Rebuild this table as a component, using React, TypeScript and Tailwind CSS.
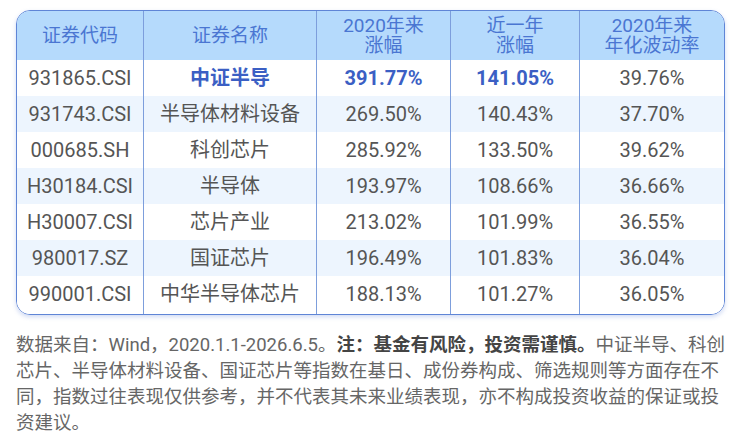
import React from "react";

const rows = [
  ["931865.CSI", "中证半导", "391.77%", "141.05%", "39.76%"],
  ["931743.CSI", "半导体材料设备", "269.50%", "140.43%", "37.70%"],
  ["000685.SH", "科创芯片", "285.92%", "133.50%", "39.62%"],
  ["H30184.CSI", "半导体", "193.97%", "108.66%", "36.66%"],
  ["H30007.CSI", "芯片产业", "213.02%", "101.99%", "36.55%"],
  ["980017.SZ", "国证芯片", "196.49%", "101.83%", "36.04%"],
  ["990001.CSI", "中华半导体芯片", "188.13%", "101.27%", "36.05%"],
];

const font = { fontFamily: 'Roboto, "Noto Sans CJK SC", sans-serif' };

export default function App() {
  return (
    <div className="w-[734px] h-[432px] bg-white overflow-hidden pt-[10px] px-[9px]" style={font}>
      <div className="ml-[7px] w-[709px] rounded-[14px] border-[1.5px] border-[#5f85d6] overflow-hidden shadow-[0_2px_4px_rgba(70,110,210,0.25)]">
        <div className="grid grid-cols-[126px_173px_134px_129px_1fr] h-[49px] bg-[#b5dafc] text-[#4a76d2] text-[19px] leading-[20px]">
          <div className="flex items-center justify-center">证券代码</div>
          <div className="flex items-center justify-center border-l border-[#7d9edc]">证券名称</div>
          <div className="flex flex-col items-center justify-center text-center border-l border-[#7d9edc]"><span>2020年来</span><span>涨幅</span></div>
          <div className="flex flex-col items-center justify-center text-center border-l border-[#7d9edc]"><span>近一年</span><span>涨幅</span></div>
          <div className="flex flex-col items-center justify-center text-center border-l border-[#7d9edc]"><span>2020年来</span><span>年化波动率</span></div>
        </div>
        {rows.map((r, i) => {
          const bold = i === 0;
          return (
            <div
              key={i}
              className={
                "grid grid-cols-[126px_173px_134px_129px_1fr] h-[36px] text-[20px] " +
                (i % 2 === 1 ? "bg-[#edf5fe]" : "bg-white")
              }
            >
              <div className="flex items-center justify-center text-[#555555]">{r[0]}</div>
              <div className={"flex items-center justify-center border-l border-[#7d9edc] " + (bold ? "text-[#3b5fc4] font-bold" : "text-[#555555]")}>{r[1]}</div>
              <div className={"flex items-center justify-center border-l border-[#7d9edc] " + (bold ? "text-[#3b5fc4] font-bold" : "text-[#555555]")}>{r[2]}</div>
              <div className={"flex items-center justify-center border-l border-[#7d9edc] " + (bold ? "text-[#3b5fc4] font-bold" : "text-[#555555]")}>{r[3]}</div>
              <div className="flex items-center justify-center border-l border-[#7d9edc] text-[#555555]">{r[4]}</div>
            </div>
          );
        })}
        <div className="grid grid-cols-[126px_173px_134px_129px_1fr] h-[2px] bg-white">
          <div />
          <div className="border-l border-[#7d9edc]" />
          <div className="border-l border-[#7d9edc]" />
          <div className="border-l border-[#7d9edc]" />
          <div className="border-l border-[#7d9edc]" />
        </div>
      </div>
      <p className="mt-[17px] ml-[7px] text-[18.5px] leading-[26px] text-[#666666] whitespace-nowrap">
        数据来自：Wind，2020.1.1-2026.6.5。<span className="font-bold text-[#444444]">注：基金有风险，投资需谨慎。</span>中证半导、科创
        <br />
        芯片、半导体材料设备、国证芯片等指数在基日、成份券构成、筛选规则等方面存在不
        <br />
        同，指数过往表现仅供参考，并不代表其未来业绩表现，亦不构成投资收益的保证或投
        <br />
        资建议。
      </p>
    </div>
  );
}
